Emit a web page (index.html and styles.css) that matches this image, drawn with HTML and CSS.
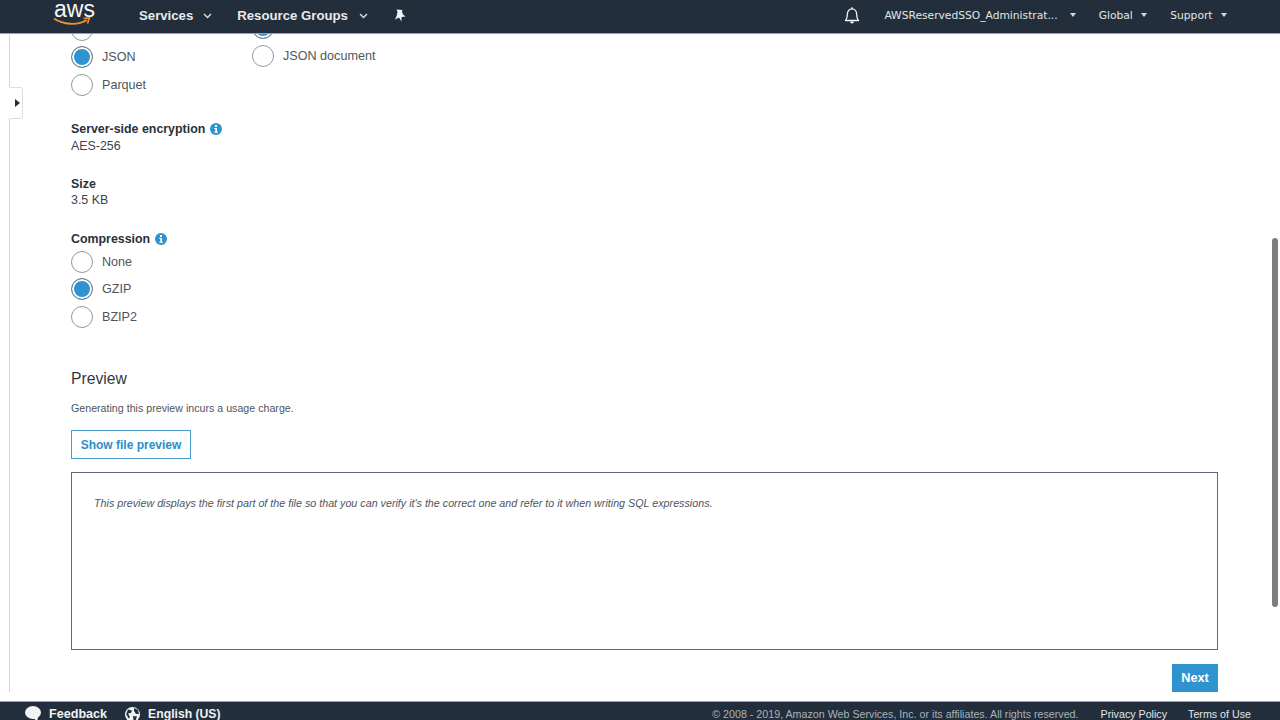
FILE: index.html
```html
<!DOCTYPE html>
<html lang="en">
<head>
<meta charset="utf-8">
<title>S3 Select</title>
<link rel="stylesheet" href="styles.css">
</head>
<body>
<header class="nav">
  <div class="logo">
    <span class="logo-text">aws</span>
    <svg class="logo-smile" width="38" height="9" viewBox="0 0 38 9"><path d="M1 1.500C10 8 25 8.500 34 3" fill="none" stroke="#ec912d" stroke-width="1.800"/><path d="M30.500 1.500L36.500 1L34.500 6.500" fill="none" stroke="#ec912d" stroke-width="1.600"/></svg>
  </div>
  <span class="nav-menu services">Services<svg class="caret-line" width="9" height="6" viewBox="0 0 9 6"><path d="M1 1l3.500 3.500L8 1" fill="none" stroke="#d5dbdb" stroke-width="1.500"/></svg></span>
  <span class="nav-menu groups">Resource Groups<svg class="caret-line" width="9" height="6" viewBox="0 0 9 6"><path d="M1 1l3.500 3.500L8 1" fill="none" stroke="#d5dbdb" stroke-width="1.500"/></svg></span>
  <svg class="pin" width="12" height="13" viewBox="0 0 12 13"><path d="M2.500 0.500L8.500 1L8 2.500L9 5.500L11.500 7.500L7.500 8L7.500 12.500L5 8.500L1 10.500L2.800 6.500L3.500 3Z" fill="#f2f3f3"/></svg>
  <div class="nav-right">
    <svg class="bell" width="16" height="17" viewBox="0 0 16 17"><path d="M1.500 13.500C3 12 3.300 10.500 3.300 7.500C3.300 4 5.300 1.800 8 1.800C10.700 1.800 12.700 4 12.700 7.500C12.700 10.500 13 12 14.500 13.500Z" fill="none" stroke="#f2f3f3" stroke-width="1.300" stroke-linejoin="round"/><path d="M6 14.500a2 2 0 0 0 4 0Z" fill="#f2f3f3"/><rect x="7.300" y="0.300" width="1.400" height="2" fill="#f2f3f3"/></svg>
    <span class="nav-item user">AWSReservedSSO_Administrat...<i class="caret"></i></span>
    <span class="nav-item global">Global<i class="caret"></i></span>
    <span class="nav-item support">Support<i class="caret"></i></span>
  </div>
</header>

<main class="main">
  <aside class="rail">
    <div class="rail-tab"><i class="rail-arrow"></i></div>
  </aside>
  <div class="content">
    <div class="format-row">
      <div class="radio-group col-a">
        <label class="radio-row"><span class="radio"></span>CSV</label>
        <label class="radio-row"><span class="radio on"></span>JSON</label>
        <label class="radio-row"><span class="radio"></span>Parquet</label>
      </div>
      <div class="radio-group col-b">
        <label class="radio-row"><span class="radio on"></span>JSON lines</label>
        <label class="radio-row"><span class="radio"></span>JSON document</label>
      </div>
    </div>

    <div class="field-enc">
      <div class="label">Server-side encryption<svg class="info" width="12" height="12" viewBox="0 0 12 12"><circle cx="6" cy="6" r="6" fill="#2e93cf"/><rect x="5" y="2" width="2" height="2" fill="#fff"/><path d="M4.300 5h2.700v3.800h1v1H4.300v-1h1V6H4.300Z" fill="#fff"/></svg></div>
      <div class="value">AES-256</div>
    </div>

    <div class="field-size">
      <div class="label">Size</div>
      <div class="value">3.5 KB</div>
    </div>

    <div class="field-comp">
      <div class="label">Compression<svg class="info" width="12" height="12" viewBox="0 0 12 12"><circle cx="6" cy="6" r="6" fill="#2e93cf"/><rect x="5" y="2" width="2" height="2" fill="#fff"/><path d="M4.300 5h2.700v3.800h1v1H4.300v-1h1V6H4.300Z" fill="#fff"/></svg></div>
      <div class="radio-group">
        <label class="radio-row"><span class="radio"></span>None</label>
        <label class="radio-row"><span class="radio on"></span>GZIP</label>
        <label class="radio-row"><span class="radio"></span>BZIP2</label>
      </div>
    </div>

    <h2 class="preview-title">Preview</h2>
    <p class="preview-note">Generating this preview incurs a usage charge.</p>
    <button class="btn-outline">Show file preview</button>
    <div class="preview-box">
      <em>This preview displays the first part of the file so that you can verify it's the correct one and refer to it when writing SQL expressions.</em>
    </div>
    <div class="actions"><button class="btn-primary">Next</button></div>
  </div>
  <div class="scrollbar"></div>
</main>

<footer class="footer">
  <span class="foot-link feedback"><svg width="18" height="16" viewBox="0 0 18 16"><ellipse cx="9" cy="6.500" rx="8" ry="6.500" fill="#f2f3f3"/><path d="M9 11L14 11L13 16Z" fill="#f2f3f3"/></svg>Feedback</span>
  <span class="foot-link lang"><svg width="15" height="15" viewBox="0 0 15 15"><circle cx="7.500" cy="7.500" r="7.500" fill="#f2f3f3"/><path d="M3 2.500L7 3.500L6 6L3 6.500L5 10L3.500 11.500L1.200 7Z M9 1L13 3L14 7L11 7L9 4Z M8 9L12 9.500L10.500 14L8.500 13Z" fill="#232f3e"/></svg>English (US)</span>
  <span class="copyright">© 2008 - 2019, Amazon Web Services, Inc. or its affiliates. All rights reserved.</span>
  <span class="foot-plain">Privacy Policy</span>
  <span class="foot-plain terms">Terms of Use</span>
</footer>
</body>
</html>
```
FILE: styles.css
```css
* { box-sizing: border-box; }
html, body { margin: 0; height: 100%; }
body {
  width: 1280px;
  height: 720px;
  overflow: hidden;
  display: flex;
  flex-direction: column;
  font-family: "Liberation Sans", Arial, sans-serif;
  color: #444;
  background: #fff;
}

/* top navigation */
.nav {
  flex: 0 0 34px;
  height: 34px;
  padding-bottom: 3px;
  display: flex;
  align-items: center;
  background: #222e3c;
  border-bottom: 1px solid #9aa0a6;
  color: #f2f3f3;
  position: relative;
  z-index: 2;
}
.logo { width: 38px; margin-left: 53px; height: 30px; position: relative; flex: none; }
.logo-text {
  position: absolute;
  left: 1px;
  top: -4px;
  font-size: 23px;
  line-height: 26px;
  color: #f5f6f6;
}
.logo-smile { position: absolute; left: 0; top: 17px; }
.nav-menu {
  font-size: 13.200px;
  font-weight: bold;
  color: #e8eaea;
  display: flex;
  align-items: center;
  flex: none;
}
.services { margin-left: 48px; }
.groups { margin-left: 25px; }
.caret-line { margin-left: 10px; margin-top: 1px; }
.groups .caret-line { margin-left: 11px; }
.pin { margin-left: 26px; flex: none; }
.nav-right { margin-left: auto; display: flex; align-items: center; flex: none; }
.bell { margin-right: 24px; }
.nav-item {
  font-family: "DejaVu Sans", Verdana, sans-serif;
  font-size: 10.700px;
  color: #e3e6e6;
  display: flex;
  align-items: center;
}
.caret {
  width: 0;
  height: 0;
  border-left: 3.500px solid transparent;
  border-right: 3.500px solid transparent;
  border-top: 4px solid #d5dbdb;
  margin-left: 8px;
}
.user .caret { margin-left: 12.500px; }
.global { margin-left: 22.500px; }
.support { margin-left: 23.500px; margin-right: 53.500px; }

/* main region */
.main { flex: 1 1 auto; position: relative; overflow: hidden; display: flex; }
.rail {
  flex: none;
  width: 10px;
  height: 658px;
  margin-left: 9px;
  border-left: 1px solid #d5d8d8;
  position: relative;
}
.rail-tab {
  position: absolute;
  left: -1px;
  top: 53px;
  width: 14px;
  height: 32px;
  background: #fff;
  border: 1px solid #dcdfdf;
  border-left-color: #fff;
  border-radius: 0 3px 3px 0;
  display: flex;
  align-items: center;
  justify-content: center;
}
.rail-arrow {
  width: 0;
  height: 0;
  border-top: 4.500px solid transparent;
  border-bottom: 4.500px solid transparent;
  border-left: 5px solid #222e3c;
  margin-left: 3px;
}
.content {
  flex: none;
  width: 1147px;
  margin-left: 52px;
  margin-top: -18px;
  font-size: 13px;
}
.format-row { display: flex; }
.col-a { width: 181px; }
.col-b { margin-top: -1.500px; }
.radio-group { display: flex; flex-direction: column; }
.radio-row {
  height: 27.500px;
  display: flex;
  align-items: center;
  gap: 9px;
  font-size: 12.600px;
  color: #50555b;
}
.radio {
  width: 22px;
  height: 22px;
  flex: none;
  border-radius: 50%;
  border: 1px solid #94999b;
  background: #fff;
}
.radio.on {
  background: #2e93cf;
  box-shadow: inset 0 0 0 2px #fff;
  border-color: #7b8184;
}
.label {
  font-weight: bold;
  color: #2a3138;
  font-size: 12.400px;
  line-height: 16px;
  display: flex;
  align-items: center;
}
.value { color: #3d444a; font-size: 12.400px; line-height: 16px; }
.info { margin-left: 5px; }
.field-enc { margin-top: 22px; }
.field-enc .value { margin-top: 1px; }
.field-size { margin-top: 22.500px; }
.field-comp { margin-top: 22.500px; }
.field-comp .radio-group { margin-top: 1.500px; }
.preview-title {
  margin: 38.500px 0 0;
  font-size: 15.700px;
  line-height: 20px;
  font-weight: normal;
  color: #333a40;
}
.preview-note {
  margin: 12px 0 0;
  font-size: 10.670px;
  line-height: 14px;
  color: #50555b;
}
.btn-outline {
  display: block;
  margin-top: 15px;
  width: 120px;
  height: 29px;
  padding: 0;
  background: #fff;
  border: 1px solid #4a9fd1;
  color: #2b8fc7;
  font: bold 12px "Liberation Sans", Arial, sans-serif;
}
.preview-box {
  margin-top: 13px;
  height: 178px;
  border: 1px solid #5f6b78;
  padding: 23px 22px;
  font-size: 10.730px;
  line-height: 14px;
  color: #50555b;
}
.actions { display: flex; justify-content: flex-end; margin-top: 14px; }
.btn-primary {
  width: 46px;
  height: 28px;
  padding: 0;
  border: none;
  background: #2e93cf;
  color: #fff;
  font: bold 12.700px "Liberation Sans", Arial, sans-serif;
}
.scrollbar {
  position: absolute;
  left: 1272px;
  top: 204px;
  width: 6px;
  height: 369px;
  border-radius: 3px;
  background: #7e7e7e;
}

/* footer */
.footer {
  flex: 0 0 19px;
  height: 19px;
  background: #222e3c;
  border-top: 1px solid #9aa0a6;
  display: flex;
  align-items: flex-start;
  color: #f2f3f3;
  overflow: hidden;
}
.foot-link {
  display: flex;
  align-items: center;
  font-size: 12.600px;
  font-weight: bold;
  line-height: 24px;
  flex: none;
}
.foot-link svg { flex: none; }
.feedback { margin-left: 24px; }
.feedback svg { margin-right: 7px; }
.lang { margin-left: 18px; font-size: 12.200px; }
.lang svg { margin-right: 8px; }
.copyright {
  margin-left: auto;
  font-size: 10.700px;
  line-height: 24px;
  color: #aab2b7;
}
.foot-plain { font-size: 10.700px; line-height: 24px; color: #e3e6e6; margin-left: 22px; }
.terms { margin-left: 21px; margin-right: 29px; }
```
